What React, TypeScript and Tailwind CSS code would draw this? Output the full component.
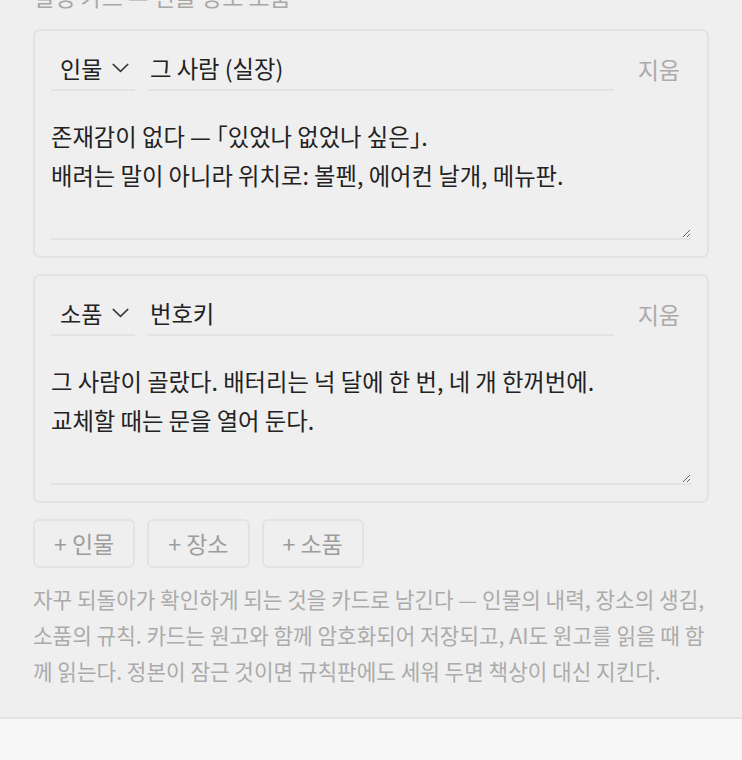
import React from "react";

const font = { fontFamily: '"Noto Sans CJK KR", "Noto Sans", sans-serif' };

function Chevron() {
  return (
    <svg width="17" height="10" viewBox="0 0 17 10" className="ml-[10px] shrink-0" fill="none">
      <path d="M1.2 1.4 L8.5 8.4 L15.8 1.4" stroke="#3a3a3a" strokeWidth="1.5" strokeLinecap="round" strokeLinejoin="round" />
    </svg>
  );
}

function Card({ kind, name, text }: { kind: string; name: string; text: string }) {
  return (
    <div className="rounded-[7px] border-2 border-[#e3e3e3] p-[16px]">
      <div className="flex items-stretch gap-[13px] h-[44px]">
        <div className="flex items-center w-[84px] pl-[9px] border-b-2 border-[#e3e3e3] text-[23px] text-[#222]">
          <span>{kind}</span>
          <Chevron />
        </div>
        <input
          className="flex-1 min-w-0 bg-transparent border-b-2 border-[#e3e3e3] pl-[2px] text-[23.3px] text-[#222] outline-none"
          style={font}
          defaultValue={name}
        />
        <button className="px-[11px] text-[23px] text-[#ababab]" style={font}>
          지움
        </button>
      </div>
      <textarea
        className="mt-[12px] block w-full h-[137px] bg-transparent border-b-2 border-[#e3e3e3] pt-[14px] text-[23.3px] leading-[39px] text-[#222] outline-none [font-feature-settings:'halt']"
        style={font}
        defaultValue={text}
      />
    </div>
  );
}

export default function App() {
  return (
    <div className="w-[742px] h-[760px] overflow-hidden bg-[#efefef] flex flex-col" style={font}>
      <div className="px-[33px] flex-1">
        <div className="-mt-[18px] h-[28px] leading-[28px] text-[23px] text-[#a8a8a8] whitespace-nowrap">
          설정 카드 — 인물 장소 소품
        </div>
        <div className="mt-[19px] flex flex-col gap-[16px]">
          <Card
            kind="인물"
            name="그 사람 (실장)"
            text={"존재감이 없다 — 「있었나 없었나 싶은」.\n배려는 말이 아니라 위치로: 볼펜, 에어컨 날개, 메뉴판."}
          />
          <Card
            kind="소품"
            name="번호키"
            text={"그 사람이 골랐다. 배터리는 넉 달에 한 번, 네 개 한꺼번에.\n교체할 때는 문을 열어 둔다."}
          />
        </div>
        <div className="mt-[16px] flex gap-[12px]">
          {["+ 인물", "+ 장소", "+ 소품"].map((l) => (
            <button
              key={l}
              className="h-[49px] px-[19px] rounded-[6px] border-2 border-[#e3e3e3] text-[23px] text-[#9d9d9d]"
              style={font}
            >
              {l}
            </button>
          ))}
        </div>
        <p className="mt-[13px] text-[21.3px] leading-[36px] text-[#ababab]">
          자꾸 되돌아가 확인하게 되는 것을 카드로 남긴다 — 인물의 내력, 장소의 생김, 소품의 규칙. 카드는 원고와 함께 암호화되어 저장되고, AI도 원고를 읽을 때 함께 읽는다. 정본이 잠근 것이면 규칙판에도 세워 두면 책상이 대신 지킨다.
        </p>
      </div>
      <div className="h-[43px] border-t-2 border-[#e3e3e3] bg-[#f7f7f7]" />
    </div>
  );
}
